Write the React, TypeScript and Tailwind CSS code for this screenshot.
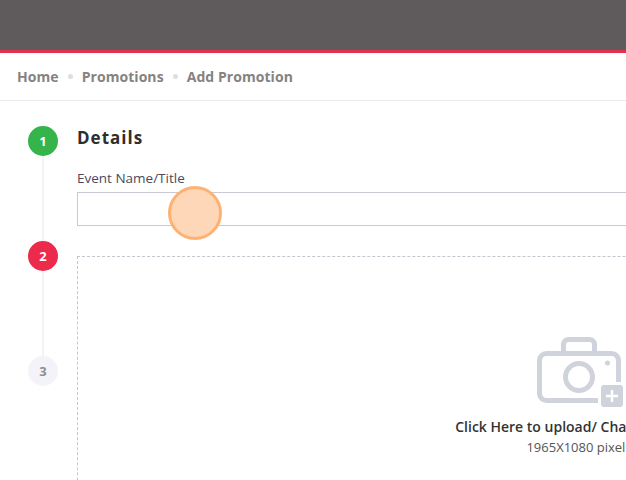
import React from "react";

function Step({ n, className, line }: { n: number; className: string; line?: boolean }) {
  return (
    <div className="flex flex-col items-center h-[115px]">
      <div className={`w-[30px] h-[30px] shrink-0 rounded-full flex items-center justify-center pt-[2px] text-[13px] font-bold ${className}`}>
        {n}
      </div>
      {line && <div className="w-[2px] flex-1 bg-[#f2f2f7]" />}
    </div>
  );
}

function CameraIcon() {
  return (
    <svg width="88" height="72" viewBox="0 0 88 72" fill="none">
      <path d="M28.5 15V8.5a5 5 0 0 1 5-5h21a5 5 0 0 1 5 5V15" stroke="#d0d2dc" strokeWidth="5" />
      <rect x="4.5" y="17.5" width="79" height="47" rx="7" stroke="#d0d2dc" strokeWidth="5" />
      <circle cx="44" cy="41" r="13.5" stroke="#d0d2dc" strokeWidth="5" />
      <circle cx="72.5" cy="27" r="2.5" fill="#d0d2dc" />
      <rect x="63" y="46" width="25" height="26" fill="#ffffff" />
      <rect x="66" y="49" width="22" height="22" rx="3" fill="#d0d2dc" />
      <path d="M77 54v12M71 60h12" stroke="#ffffff" strokeWidth="2.5" />
    </svg>
  );
}

export default function App() {
  return (
    <div className="relative w-[626px] h-[480px] overflow-hidden bg-white font-['Open_Sans',sans-serif]">
      <div className="h-[53px] bg-[#5f5b5c] border-b-[3px] border-[#e0314f]" />

      <nav className="h-[48px] border-b border-[#ebebeb] flex items-center pl-[17px] text-[14px] font-bold tracking-[0.06px] text-[#86827f]">
        <span>Home</span>
        <span className="w-[5px] h-[5px] rounded-full bg-[#dedede] mx-[9px]" />
        <span>Promotions</span>
        <span className="w-[5px] h-[5px] rounded-full bg-[#dedede] mx-[9px]" />
        <span>Add Promotion</span>
      </nav>

      <div className="flex pt-[25px] pl-[28px]">
        <div className="w-[30px] shrink-0">
          <Step n={1} className="bg-[#34b44a] text-white" line />
          <Step n={2} className="bg-[#ec2a4b] text-white" line />
          <Step n={3} className="bg-[#f3f3f9] text-[#8e8e93]" />
        </div>

        <div className="ml-[19px] w-[1004px] shrink-0">
          <h2 className="text-[17px] leading-[23px] font-bold tracking-[1px] text-[#2e2e2e]">Details</h2>
          <label className="block mt-[20px] text-[13.5px] leading-[18px] text-[#4a4a5c]">Event Name/Title</label>
          <input className="block mt-[5px] w-full h-[34px] border border-[#c8c9d2] bg-white outline-none" />

          <div className="mt-[30px] h-[300px] border border-dashed border-[#c4c5ce] flex flex-col items-center pt-[79px]">
            <CameraIcon />
            <p className="mt-[9px] text-[14px] leading-[19px] font-semibold text-[#333333]">Click Here to upload/ Change Picture</p>
            <p className="mt-[2px] text-[13px] leading-[19px] text-[#555555]">1965X1080 pixels</p>
          </div>
        </div>
      </div>

      {/* click indicator */}
      <div className="absolute left-[168px] top-[185.5px] w-[54px] h-[54px] rounded-full border-[3px] border-[#fdb272] bg-[#fed7b9]" />
    </div>
  );
}
